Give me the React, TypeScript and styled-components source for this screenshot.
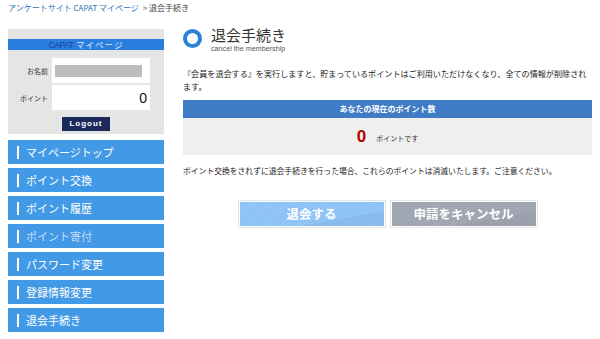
import styled, { createGlobalStyle } from "styled-components";

const GlobalStyle = createGlobalStyle`
  html, body {
    margin: 0;
    padding: 0;
    background: #ffffff;
  }
  body {
    font-family: "Noto Sans CJK JP", "Noto Sans", sans-serif;
    color: #333333;
  }
`;

const menuItems = [
  { label: "マイページトップ" },
  { label: "ポイント交換" },
  { label: "ポイント履歴" },
  { label: "ポイント寄付", muted: true },
  { label: "パスワード変更" },
  { label: "登録情報変更" },
  { label: "退会手続き" },
];

export default function App() {
  return (
    <>
      <GlobalStyle />
      <Page>
        <Breadcrumb>
          <CrumbLink>アンケートサイト CAPAT マイページ</CrumbLink>
          <span>&gt; 退会手続き</span>
        </Breadcrumb>
        <Columns>
          <Sidebar>
            <AccountPanel>
              <PanelTitle>
                <TitleBrand>CAPAT</TitleBrand> マイページ
              </PanelTitle>
              <FieldRow>
                <FieldLabel>お名前</FieldLabel>
                <FieldValue>
                  <NameMask />
                </FieldValue>
              </FieldRow>
              <FieldRow>
                <FieldLabel>ポイント</FieldLabel>
                <FieldValue align="right">0</FieldValue>
              </FieldRow>
              <LogoutButton>Logout</LogoutButton>
            </AccountPanel>
            <Menu>
              {menuItems.map((item) => (
                <MenuItem key={item.label} muted={item.muted}>
                  <MenuBar />
                  {item.label}
                </MenuItem>
              ))}
            </Menu>
          </Sidebar>
          <Main>
            <Heading>
              <Ring />
              <HeadingText>
                <HeadingTitle>退会手続き</HeadingTitle>
                <HeadingSub>cancel the membership</HeadingSub>
              </HeadingText>
            </Heading>
            <Paragraph>
              『会員を退会する』を実行しますと、貯まっているポイントはご利用いただけなくなり、全ての情報が削除されます。
            </Paragraph>
            <PointBox>
              <PointHeader>あなたの現在のポイント数</PointHeader>
              <PointBody>
                <PointNumber>0</PointNumber>
                <PointUnit>ポイントです</PointUnit>
              </PointBody>
            </PointBox>
            <Note>
              ポイント交換をされずに退会手続きを行った場合、これらのポイントは消滅いたします。ご注意ください。
            </Note>
            <Actions>
              <ActionButton tone="#8cc2f6">退会する</ActionButton>
              <ActionButton tone="#9ea5b1">申請をキャンセル</ActionButton>
            </Actions>
          </Main>
        </Columns>
      </Page>
    </>
  );
}

const Page = styled.div`
  width: 600px;
  height: 339px;
  overflow: hidden;
  padding: 2px 8px 0 8px;
  box-sizing: border-box;
`;

const Breadcrumb = styled.div`
  font-size: 8px;
  line-height: 12px;
  color: #444444;
  display: flex;
  gap: 4px;
`;

const CrumbLink = styled.span`
  color: #2a6fb8;
`;

const Columns = styled.div`
  display: flex;
  gap: 19px;
  margin-top: 15px;
`;

const Sidebar = styled.div`
  width: 156px;
  flex-shrink: 0;
`;

const AccountPanel = styled.div`
  background: repeating-linear-gradient(
    90deg,
    #e2e2e2 0,
    #e2e2e2 1px,
    #e8e8e8 1px,
    #e8e8e8 2px
  );
  padding: 10px 0 3px;
  display: flex;
  flex-direction: column;
  align-items: center;
  height: 105px;
  box-sizing: border-box;
`;

const PanelTitle = styled.div`
  width: 100%;
  height: 11px;
  background: #2a7fde;
  color: #dbe9ff;
  font-size: 8.5px;
  line-height: 11px;
  text-align: center;
  letter-spacing: 1px;
  margin-bottom: 8px;
`;

const TitleBrand = styled.span`
  color: #1a3f9c;
  font-family: "Liberation Sans", sans-serif;
  letter-spacing: -0.5px;
`;

const FieldRow = styled.div`
  display: flex;
  align-items: center;
  width: 100%;
  margin-bottom: 2px;
`;

const FieldLabel = styled.div`
  width: 44px;
  text-align: right;
  font-size: 7px;
  color: #333333;
  box-sizing: border-box;
  padding-right: 4px;
`;

const FieldValue = styled.div<{ align?: string }>`
  width: 98px;
  height: 25px;
  background: #ffffff;
  display: flex;
  align-items: center;
  justify-content: ${(p) => (p.align === "right" ? "flex-end" : "flex-start")};
  padding: 0 3px;
  box-sizing: border-box;
  font-family: "Liberation Sans", sans-serif;
  font-size: 14px;
  color: #111111;
`;

const NameMask = styled.div`
  width: 87px;
  height: 12px;
  background: #bdbdbd;
`;

const LogoutButton = styled.div`
  margin-top: 5px;
  width: 48px;
  height: 14px;
  background: #1b2a5a;
  color: #ffffff;
  font-family: "Liberation Sans", sans-serif;
  font-weight: bold;
  font-size: 8px;
  letter-spacing: 1px;
  line-height: 14px;
  text-align: center;
`;

const Menu = styled.div`
  display: flex;
  flex-direction: column;
  gap: 4px;
  margin-top: 6px;
`;

const MenuItem = styled.div<{ muted?: boolean }>`
  height: 24px;
  background: #4299e6;
  display: flex;
  align-items: center;
  font-size: 11px;
  color: ${(p) => (p.muted ? "#c7defa" : "#ffffff")};
`;

const MenuBar = styled.span`
  display: inline-block;
  width: 2px;
  height: 13px;
  background: #ffffff;
  margin-left: 9px;
  margin-right: 7px;
`;

const Main = styled.div`
  flex: 1;
`;

const Heading = styled.div`
  display: flex;
  align-items: flex-start;
  gap: 9px;
`;

const Ring = styled.div`
  width: 19px;
  height: 19px;
  border: 4px solid #2b80d8;
  border-radius: 50%;
  box-sizing: border-box;
`;

const HeadingText = styled.div`
  display: flex;
  flex-direction: column;
  margin-top: -5px;
`;

const HeadingTitle = styled.div`
  font-size: 15px;
  line-height: 21px;
  color: #333333;
`;

const HeadingSub = styled.div`
  font-family: "Liberation Sans", sans-serif;
  font-size: 7.2px;
  line-height: 8px;
  color: #555555;
`;

const Paragraph = styled.p`
  margin: 14px 0 0;
  font-size: 8.1px;
  line-height: 13px;
  color: #222222;
`;

const PointBox = styled.div`
  margin-top: 7px;
`;

const PointHeader = styled.div`
  height: 18px;
  background: #3f7cc5;
  color: #ffffff;
  font-size: 8px;
  font-weight: bold;
  line-height: 18px;
  text-align: center;
`;

const PointBody = styled.div`
  height: 37px;
  background: #efefef;
  display: flex;
  align-items: center;
  justify-content: center;
  gap: 10px;
`;

const PointNumber = styled.span`
  font-family: "Liberation Sans", sans-serif;
  font-size: 17px;
  font-weight: bold;
  color: #b00000;
`;

const PointUnit = styled.span`
  font-size: 7px;
  color: #333333;
  margin-top: 2px;
`;

const Note = styled.p`
  margin: 10px 0 0;
  font-size: 7.8px;
  line-height: 12px;
  color: #222222;
`;

const Actions = styled.div`
  display: flex;
  justify-content: center;
  gap: 6px;
  margin-top: 24px;
`;

const ActionButton = styled.div<{ tone: string }>`
  width: 144px;
  height: 24px;
  background: linear-gradient(
      170deg,
      transparent 0,
      transparent 70%,
      rgba(0, 0, 0, 0.04) 70%
    ),
    repeating-linear-gradient(
      135deg,
      rgba(255, 255, 255, 0.08) 0,
      rgba(255, 255, 255, 0.08) 1px,
      transparent 1px,
      transparent 3px
    ),
    ${(p) => p.tone};
  border: 1px solid #ffffff;
  box-shadow: 0 0 0 1px #e2e6ea;
  color: #ffffff;
  font-size: 12.5px;
  font-weight: bold;
  line-height: 24px;
  text-align: center;
`;
